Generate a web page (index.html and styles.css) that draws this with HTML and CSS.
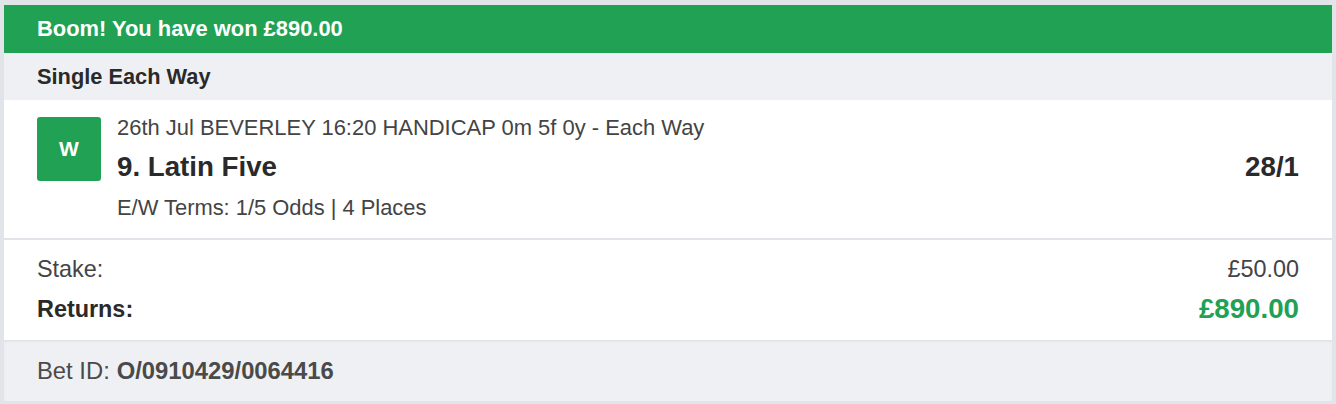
FILE: index.html
```html
<!DOCTYPE html>
<html lang="en">
<head>
    <meta charset="UTF-8">
    <meta name="viewport" content="width=device-width, initial-scale=1.0">
    <title>Bet Receipt</title>
    <link rel="stylesheet" href="styles.css">
</head>
<body>
    <div class="receipt">
        <div class="banner">Boom! You have won £890.00</div>
        <div class="bet-type">Single Each Way</div>

        <div class="selection">
            <div class="badge">W</div>
            <div class="selection-info">
                <div class="event">26th Jul BEVERLEY 16:20 HANDICAP 0m 5f 0y - Each Way</div>
                <div class="runner-row">
                    <span class="runner">9. Latin Five</span>
                    <span class="odds">28/1</span>
                </div>
                <div class="terms">E/W Terms: 1/5 Odds | 4 Places</div>
            </div>
        </div>

        <div class="totals">
            <div class="total-row">
                <span>Stake:</span>
                <span>£50.00</span>
            </div>
            <div class="total-row returns">
                <span>Returns:</span>
                <span class="amount">£890.00</span>
            </div>
        </div>

        <div class="footer">Bet ID: <strong>O/0910429/0064416</strong></div>
    </div>
</body>
</html>
```

FILE: styles.css
```css
body { margin: 0; padding: 5px 4px 3px; background: #e1e5ea; font-family: "Liberation Sans", Arial, sans-serif; color: #2a2a2a; }
.receipt { background: #fff; }
.banner { background: #21a154; color: #fff; font-weight: bold; font-size: 21.9px; height: 48px; display: flex; align-items: center; padding: 0 33px; }
.bet-type { background: #eff0f4; font-weight: bold; font-size: 21.8px; height: 47px; display: flex; align-items: center; padding: 0 33px; }
.selection { display: flex; gap: 16px; padding: 17px 33px 0; height: 121px; border-bottom: 2px solid #e1e5ea; }
.badge { width: 64px; height: 64px; flex-shrink: 0; background: #21a154; color: #fff; border-radius: 3px; font-weight: bold; font-size: 21px; display: flex; align-items: center; justify-content: center; }
.selection-info { flex: 1; }
.event { font-size: 21.95px; color: #444; line-height: 22px; }
.runner-row { display: flex; justify-content: space-between; align-items: center; margin-top: 14px; line-height: 28px; }
.runner, .odds { font-weight: bold; font-size: 27.7px; }
.terms { font-size: 21.9px; color: #444; margin-top: 15px; line-height: 24px; }
.totals { padding: 15px 33px 0; height: 85px; }
.total-row { display: flex; justify-content: space-between; align-items: center; font-size: 23.4px; color: #444; height: 28px; }
.total-row.returns { margin-top: 12px; font-weight: bold; color: #2a2a2a; }
.total-row .amount { color: #21a154; font-size: 27.7px; }
.footer { background: #eff0f4; border-top: 1px solid #dfe2e6; box-shadow: inset 0 1px 2px rgba(0,0,0,0.04); height: 60px; display: flex; align-items: center; padding: 0 33px; font-size: 23.8px; color: #4a4a4a; gap: 7px; }
.footer strong { color: #4a4a4a; }
```
